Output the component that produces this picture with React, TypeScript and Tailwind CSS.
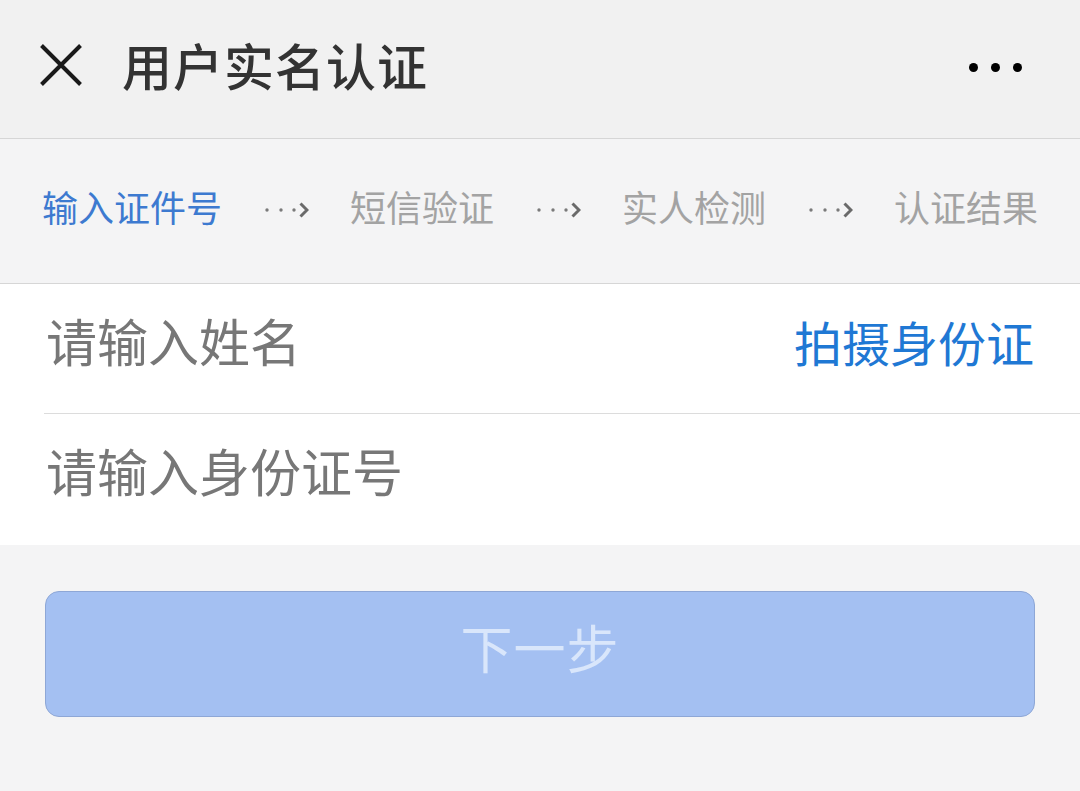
import React from "react";

function Arrow() {
  return (
    <svg width="46" height="20" viewBox="0 0 46 20" className="shrink-0 mb-[3px]">
      <circle cx="4" cy="10" r="1.7" fill="#7a7a7a" />
      <circle cx="18" cy="10" r="1.7" fill="#7a7a7a" />
      <circle cx="31" cy="10" r="1.7" fill="#7a7a7a" />
      <path d="M37.5 3.5 L44 10 L37.5 16.5" fill="none" stroke="#6a6a6a" strokeWidth="3" />
    </svg>
  );
}

export default function App() {
  return (
    <div
      className="w-[1080px] h-[791px] bg-[#f4f4f5] flex flex-col overflow-hidden"
      style={{ fontFamily: '"Noto Sans CJK SC", "Noto Sans", sans-serif' }}
    >
      {/* Header */}
      <div className="h-[139px] shrink-0 bg-[#f1f1f1] border-b border-[#d6d6d6] flex items-center pl-[40px] pr-[58px]">
        <svg width="42" height="42" viewBox="0 0 42 42" className="shrink-0 mb-[8px]">
          <path d="M1.5 1.5 L40.5 40.5 M40.5 1.5 L1.5 40.5" stroke="#1a1a1a" strokeWidth="4" />
        </svg>
        <div className="ml-[40px] mb-[10px] text-[50px] leading-none font-medium text-[#333333] tracking-[1px]">
          用户实名认证
        </div>
        <div className="ml-auto mb-[4px] flex items-center gap-[13px]">
          <span className="w-[9px] h-[9px] rounded-full bg-black" />
          <span className="w-[9px] h-[9px] rounded-full bg-black" />
          <span className="w-[9px] h-[9px] rounded-full bg-black" />
        </div>
      </div>

      {/* Steps */}
      <div className="h-[145px] shrink-0 bg-[#f4f4f5] border-b border-[#d6d6d6] flex items-center justify-between pl-[42px] pr-[42px] text-[36px] leading-none">
        <span className="mb-[10px] text-[#3d7ad0]">输入证件号</span>
        <Arrow />
        <span className="mb-[10px] text-[#a3a3a3]">短信验证</span>
        <Arrow />
        <span className="mb-[10px] text-[#a3a3a3]">实人检测</span>
        <Arrow />
        <span className="mb-[10px] text-[#a3a3a3]">认证结果</span>
      </div>

      {/* Form */}
      <div className="bg-white shrink-0 flex flex-col">
        <div className="h-[130px] ml-[44px] flex items-center justify-between pl-[2px] pr-[46px] border-b border-[#dcdcdc]">
          <span className="mb-[16px] text-[51px] leading-none text-[#777777]">请输入姓名</span>
          <span className="mb-[16px] text-[48px] leading-none text-[#1f78d4]">拍摄身份证</span>
        </div>
        <div className="h-[131px] flex items-center pl-[46px]">
          <span className="mb-[18px] text-[51px] leading-none text-[#777777]">请输入身份证号</span>
        </div>
      </div>

      {/* Button */}
      <div className="px-[45px] pt-[46px]">
        <div className="h-[126px] rounded-[14px] bg-[#a4c0f2] border border-[#8ea7d6] flex items-center justify-center">
          <span className="mb-[14px] text-[52px] leading-none text-[#d9e6fb] tracking-[1px]">下一步</span>
        </div>
      </div>
    </div>
  );
}
